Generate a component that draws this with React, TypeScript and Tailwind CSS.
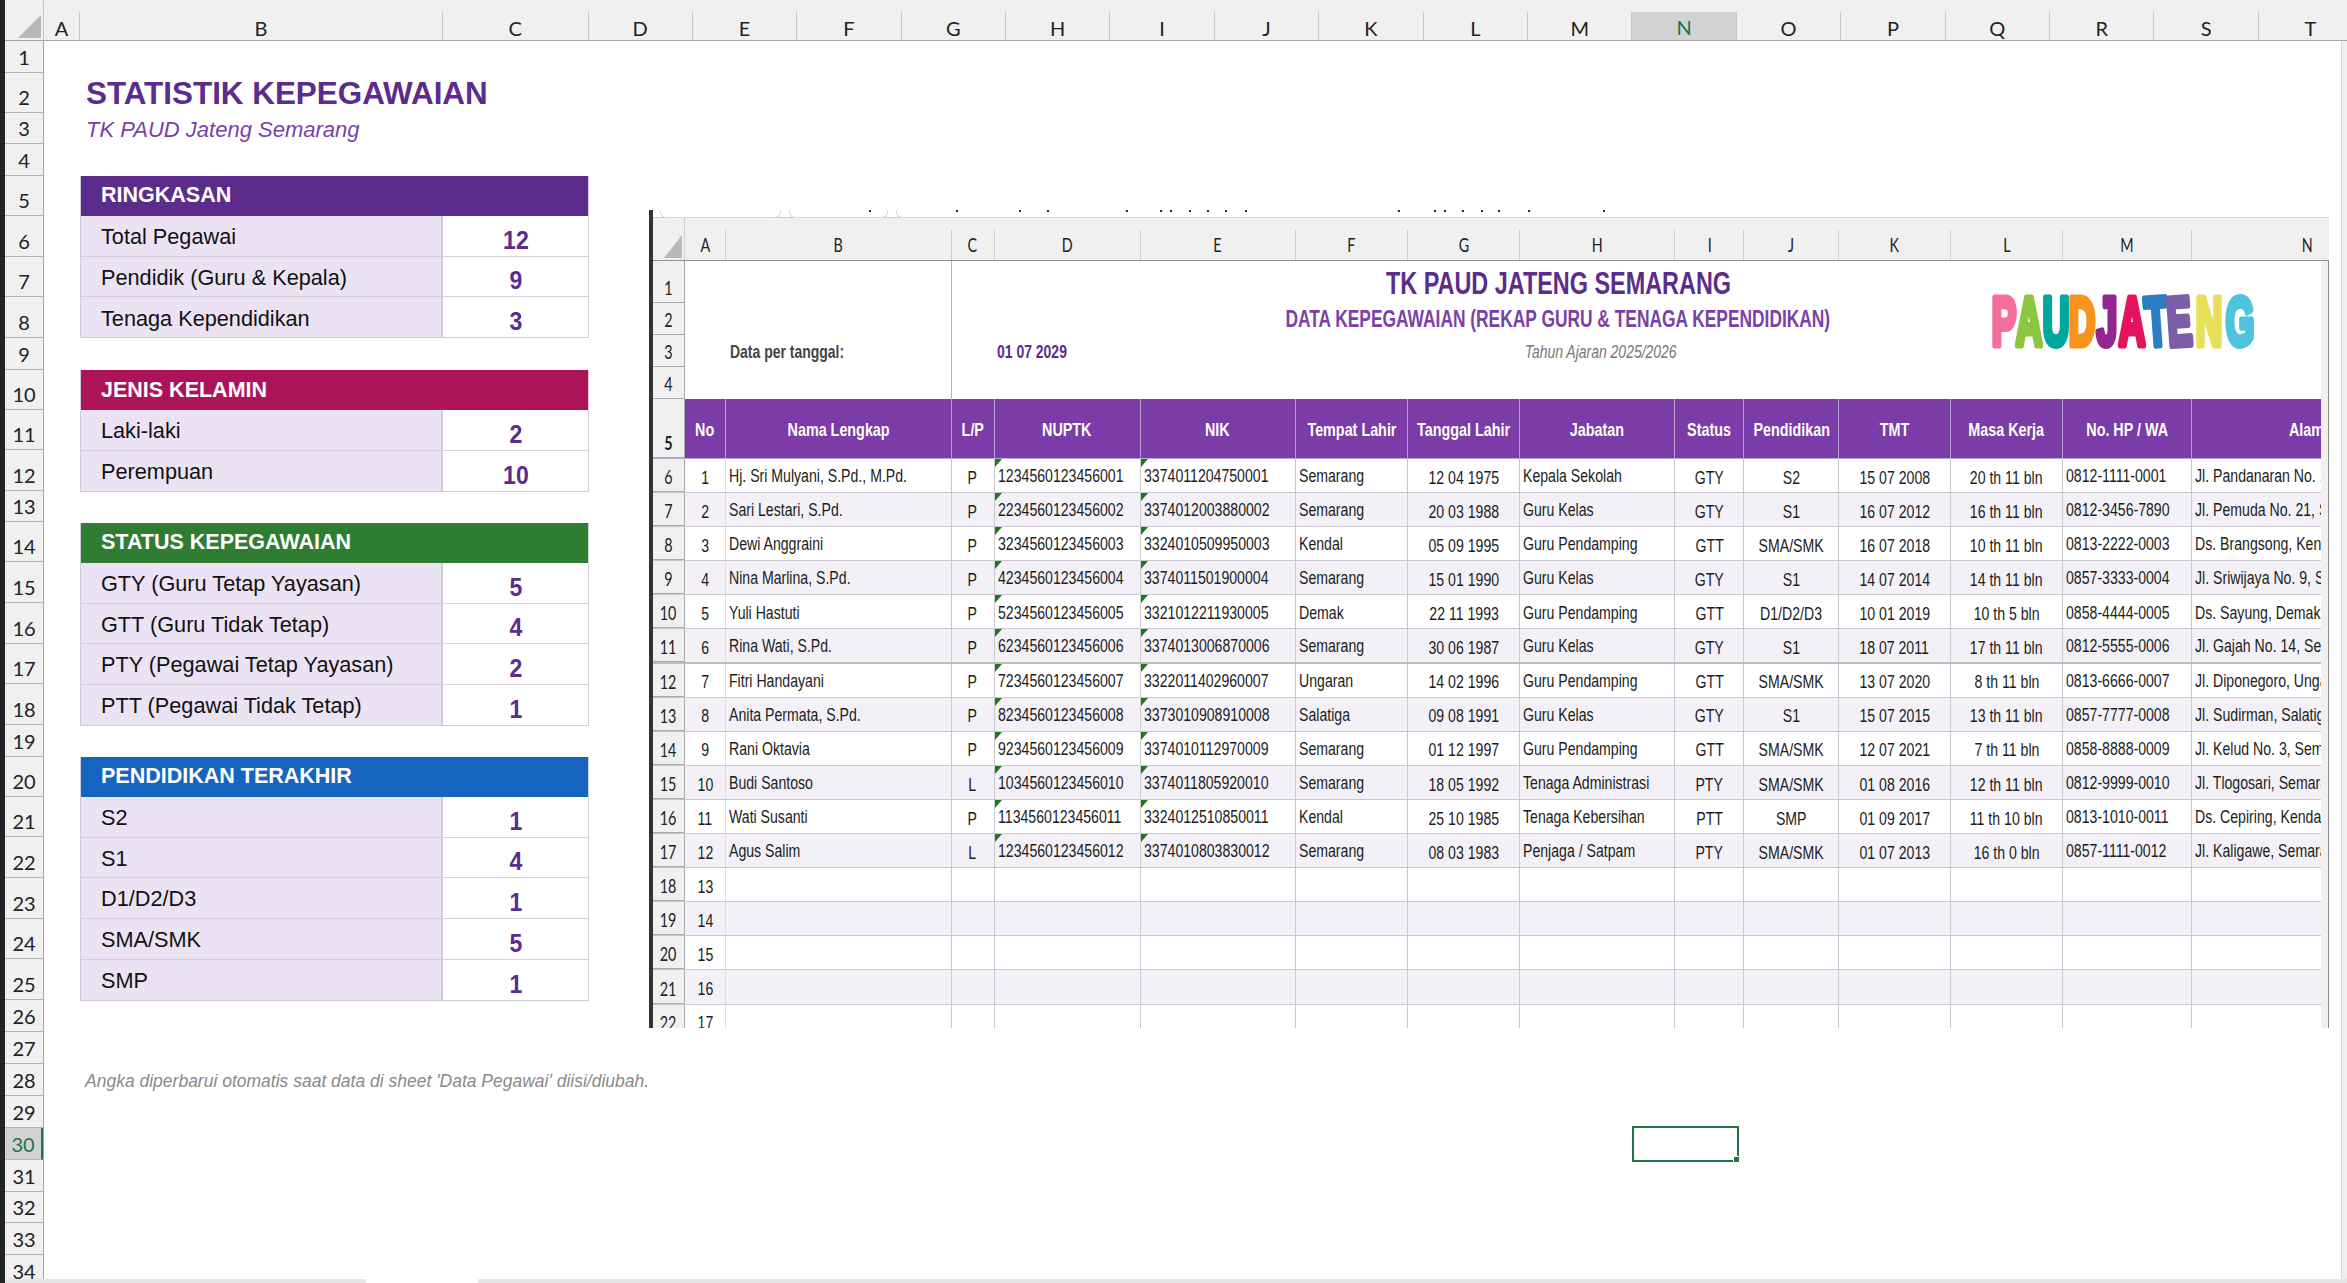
const sheetCols = "grid-cols-[39px_36px_363px_145.5px_repeat(17,104.4px)]"
const picCols = "grid-cols-[32px_41px_225.5px_43px_146px_155.5px_112.4px_111.6px_155.5px_69px_94.5px_112px_112px_129px_129px]"

const sheetLetters = ["A", "B", "C", "D", "E", "F", "G", "H", "I", "J", "K", "L", "M", "N", "O", "P", "Q", "R", "S", "T", "U"]
const picLetters = ["A", "B", "C", "D", "E", "F", "G", "H", "I", "J", "K", "L", "M", "N"]

const rowHeights = [
  "h-[32px]", "h-[40px]", "h-[31px]", "h-[32px]", "h-[40px]", "h-[41px]", "h-[40px]", "h-[41px]", "h-[32px]", "h-[40px]",
  "h-[40px]", "h-[41px]", "h-[31px]", "h-[40px]", "h-[41px]", "h-[41px]", "h-[40px]", "h-[41px]", "h-[32px]", "h-[40px]",
  "h-[40px]", "h-[41px]", "h-[41px]", "h-[40px]", "h-[41px]", "h-[32px]", "h-[32px]", "h-[32px]", "h-[32px]", "h-[32px]",
  "h-[32px]", "h-[31px]", "h-[32px]", "h-[32px]",
]

const panels = [
  {
    title: "RINGKASAN",
    color: "bg-[#5b2c8b]",
    gap: "mt-0",
    rows: [["Total Pegawai", "12"], ["Pendidik (Guru & Kepala)", "9"], ["Tenaga Kependidikan", "3"]],
  },
  {
    title: "JENIS KELAMIN",
    color: "bg-[#ad1457]",
    gap: "mt-[32px]",
    rows: [["Laki-laki", "2"], ["Perempuan", "10"]],
  },
  {
    title: "STATUS KEPEGAWAIAN",
    color: "bg-[#2e7d32]",
    gap: "mt-[31px]",
    rows: [["GTY (Guru Tetap Yayasan)", "5"], ["GTT (Guru Tidak Tetap)", "4"], ["PTY (Pegawai Tetap Yayasan)", "2"], ["PTT (Pegawai Tidak Tetap)", "1"]],
  },
  {
    title: "PENDIDIKAN TERAKHIR",
    color: "bg-[#1565c0]",
    gap: "mt-[31px]",
    rows: [["S2", "1"], ["S1", "4"], ["D1/D2/D3", "1"], ["SMA/SMK", "5"], ["SMP", "1"]],
  },
]

const pegawai = [
  ["Hj. Sri Mulyani, S.Pd., M.Pd.", "P", "1234560123456001", "3374011204750001", "Semarang", "12 04 1975", "Kepala Sekolah", "GTY", "S2", "15 07 2008", "20 th 11 bln", "0812-1111-0001", "Jl. Pandanaran No. 1, Semarang"],
  ["Sari Lestari, S.Pd.", "P", "2234560123456002", "3374012003880002", "Semarang", "20 03 1988", "Guru Kelas", "GTY", "S1", "16 07 2012", "16 th 11 bln", "0812-3456-7890", "Jl. Pemuda No. 21, Semarang"],
  ["Dewi Anggraini", "P", "3234560123456003", "3324010509950003", "Kendal", "05 09 1995", "Guru Pendamping", "GTT", "SMA/SMK", "16 07 2018", "10 th 11 bln", "0813-2222-0003", "Ds. Brangsong, Kendal"],
  ["Nina Marlina, S.Pd.", "P", "4234560123456004", "3374011501900004", "Semarang", "15 01 1990", "Guru Kelas", "GTY", "S1", "14 07 2014", "14 th 11 bln", "0857-3333-0004", "Jl. Sriwijaya No. 9, Semarang"],
  ["Yuli Hastuti", "P", "5234560123456005", "3321012211930005", "Demak", "22 11 1993", "Guru Pendamping", "GTT", "D1/D2/D3", "10 01 2019", "10 th 5 bln", "0858-4444-0005", "Ds. Sayung, Demak"],
  ["Rina Wati, S.Pd.", "P", "6234560123456006", "3374013006870006", "Semarang", "30 06 1987", "Guru Kelas", "GTY", "S1", "18 07 2011", "17 th 11 bln", "0812-5555-0006", "Jl. Gajah No. 14, Semarang"],
  ["Fitri Handayani", "P", "7234560123456007", "3322011402960007", "Ungaran", "14 02 1996", "Guru Pendamping", "GTT", "SMA/SMK", "13 07 2020", "8 th 11 bln", "0813-6666-0007", "Jl. Diponegoro, Ungaran"],
  ["Anita Permata, S.Pd.", "P", "8234560123456008", "3373010908910008", "Salatiga", "09 08 1991", "Guru Kelas", "GTY", "S1", "15 07 2015", "13 th 11 bln", "0857-7777-0008", "Jl. Sudirman, Salatiga"],
  ["Rani Oktavia", "P", "9234560123456009", "3374010112970009", "Semarang", "01 12 1997", "Guru Pendamping", "GTT", "SMA/SMK", "12 07 2021", "7 th 11 bln", "0858-8888-0009", "Jl. Kelud No. 3, Semarang"],
  ["Budi Santoso", "L", "1034560123456010", "3374011805920010", "Semarang", "18 05 1992", "Tenaga Administrasi", "PTY", "SMA/SMK", "01 08 2016", "12 th 11 bln", "0812-9999-0010", "Jl. Tlogosari, Semarang"],
  ["Wati Susanti", "P", "1134560123456011", "3324012510850011", "Kendal", "25 10 1985", "Tenaga Kebersihan", "PTT", "SMP", "01 09 2017", "11 th 10 bln", "0813-1010-0011", "Ds. Cepiring, Kendal"],
  ["Agus Salim", "L", "1234560123456012", "3374010803830012", "Semarang", "08 03 1983", "Penjaga / Satpam", "PTY", "SMA/SMK", "01 07 2013", "16 th 0 bln", "0857-1111-0012", "Jl. Kaligawe, Semarang"],
]

// true = centred column in the pasted table, starting at Nama Lengkap
const centred = [false, true, false, false, false, true, false, true, true, true, true, false, false]

const specks = [869, 956, 1019, 1047, 1126, 1160, 1170, 1189, 1207, 1225, 1245, 1398, 1434, 1444, 1462, 1481, 1498, 1528, 1603]

const logoLetters = [
  { c: "P", x: 13, fill: "#f76e9b", r: 0 },
  { c: "A", x: 38, fill: "#8cc63f", r: 0 },
  { c: "U", x: 65, fill: "#00a79d", r: 0 },
  { c: "D", x: 91, fill: "#f7941d", r: 0 },
  { c: "J", x: 116, fill: "#92278f", r: 0 },
  { c: "A", x: 141, fill: "#e3145f", r: 0 },
  { c: "T", x: 167, fill: "#2b7ec1", r: -4 },
  { c: "E", x: 190, fill: "#7b5ea7", r: -4 },
  { c: "N", x: 218, fill: "#e6e05a", r: 0 },
  { c: "G", x: 249, fill: "#4dc4db", r: 0 },
]

// The pasted table is a squeezed picture, so its text is narrowed the same way
function Narrow({ children, left, className = "" }: { children: React.ReactNode; left?: boolean; className?: string }) {
  return (
    <span className={`inline-block shrink-0 whitespace-nowrap scale-x-[0.755] ${left ? "origin-left" : "origin-center"} ${className}`}>
      {children}
    </span>
  )
}

function Panel({ panel }: { panel: (typeof panels)[number] }) {
  return (
    <div className={`${panel.gap} w-[509px] border-x border-b border-[#cfcbd9]`}>
      <div className={`flex h-[40px] items-center pb-[1px] pl-[20px] text-[21.5px] font-bold text-white ${panel.color}`}>{panel.title}</div>
      {panel.rows.map(([label, value]) => (
        <div key={label} className="grid h-[40.67px] grid-cols-[362px_1fr] border-b border-[#d3d0db] last:h-[40px] last:border-b-0">
          <div className="flex items-center border-r-2 border-[#cfcadd] bg-[#ebe3f3] pt-[3px] pl-[20px] text-[21.7px] text-[#111]">{label}</div>
          <div className="flex items-center justify-center pt-[9px] text-[25px] leading-none font-bold text-[#5b2c8b]">
            <span className="inline-block scale-x-[0.92]">{value}</span>
          </div>
        </div>
      ))}
    </div>
  )
}

function Logo() {
  return (
    <svg className="absolute top-[30px] left-[1338px]" width="266" height="60" viewBox="0 0 266 60">
      {logoLetters.map((l, i) => (
        <text
          key={i}
          transform={`translate(${l.x} 54) rotate(${l.r}) scale(0.54 1)`}
          textAnchor="middle"
          fontFamily="'Liberation Sans', sans-serif"
          fontWeight="700"
          fontSize="68"
          fill={l.fill}
          stroke={l.fill}
          strokeWidth="7"
          strokeLinejoin="round"
        >
          {l.c}
        </text>
      ))}
    </svg>
  )
}

function PicRowNum({ n, className = "" }: { n: number; className?: string }) {
  return (
    <div className={`flex items-end justify-center border-r border-b border-[#a9a9a9] bg-[#f0f0f0] [font-family:Lato,sans-serif] text-[19px] leading-none text-[#222] ${className}`}>
      <Narrow className="pb-[5px]">{n}</Narrow>
    </div>
  )
}

function BannerRow({ n, h, left, children }: { n: number; h: string; left?: React.ReactNode; children?: React.ReactNode }) {
  return (
    <div className={`flex ${h}`}>
      <PicRowNum n={n} className="w-[32px]" />
      <div className="flex w-[266.5px] items-center border-r border-[#b5b5b5] pl-[45px]">{left}</div>
      <div className="flex flex-1 items-center">{children}</div>
    </div>
  )
}

function PicRow({ rowNo, no, cells, alt }: { rowNo: number; no: number; cells?: string[]; alt: boolean }) {
  const thick = rowNo === 11
  return (
    <div className={`grid h-[34.1px] ${picCols} ${alt ? "bg-[#f3f1f7]" : "bg-white"} ${thick ? "border-b-2 border-[#bdbdbd]" : "border-b border-[#c9c7d0]"} text-[18.7px] leading-none text-[#1c1c1c]`}>
      <PicRowNum n={rowNo} />
      <div className="flex items-center justify-center overflow-hidden border-r border-[#dddbe3] pt-[5px]">
        <Narrow>{no}</Narrow>
      </div>
      {Array.from({ length: 13 }).map((_, i) => {
        const value = cells?.[i]
        const flagged = value && (i === 2 || i === 3)
        return (
          <div
            key={i}
            className={`relative flex items-center overflow-hidden border-[#c9c7d0] ${i < 12 ? "border-r" : ""} ${centred[i] ? "justify-center pt-[5px]" : "pt-[2px] pl-[3px]"}`}
          >
            {flagged && (
              <svg className="absolute top-0 left-0" width="7" height="8" viewBox="0 0 7 8">
                <polygon points="0,0 7,0 0,8" fill="#1c7a1c" />
              </svg>
            )}
            {value && <Narrow left={!centred[i]}>{value}</Narrow>}
          </div>
        )
      })}
    </div>
  )
}

function PastedTable() {
  return (
    <div className="absolute top-[169px] left-[605px] h-[818px] w-[1680px] overflow-hidden border-l-4 border-[#333] bg-white">
      {/* cut-off ribbon above the pasted picture */}
      <div className="relative flex h-[8px] gap-[8px] border-b border-[#cfcfcf] pl-[7px]">
        <div className="h-[8px] w-[121px] rounded-b-md border-x border-b border-[#d8d8d8] bg-white" />
        <div className="h-[8px] w-[99px] rounded-b-md border-x border-b border-[#d8d8d8] bg-white" />
        <div className="h-[8px] flex-1 rounded-bl-md border-l border-b border-[#d8d8d8] bg-white" />
        {specks.map((x) => (
          <span key={x} className="h-[2px] w-[2px] shrink-0 bg-[#333]" style={{ position: "absolute", top: 0, left: x - 653 }} />
        ))}
      </div>

      <div className="bg-[#f0f0f0]">
        <div className={`grid h-[43px] ${picCols} border-b border-[#8f8f8f]`}>
          <div className="relative border-r border-[#cfcfcf]">
            <svg className="absolute top-[17px] left-[11px]" width="18" height="23" viewBox="0 0 18 23">
              <polygon points="18,0 18,23 0,23" fill="#b9b9b9" />
            </svg>
          </div>
          {picLetters.map((l) => (
            <div key={l} className="mt-[12px] flex items-center justify-center border-r border-[#cfcfcf] [font-family:Lato,sans-serif] text-[19px] text-[#222] last:justify-end last:border-r-0 last:pr-[6px]">
              <Narrow>{l}</Narrow>
            </div>
          ))}
        </div>
      </div>

      <div className="flex">
        <div className="w-[1668px]">
          <div className="relative">
            <BannerRow n={1} h="h-[42px]">
              <div className="flex w-[1213.5px] justify-center pt-[2px] text-[31px] leading-none font-bold text-[#5b2c8b]">
                <Narrow>TK PAUD JATENG SEMARANG</Narrow>
              </div>
            </BannerRow>
            <BannerRow n={2} h="h-[32px]">
              <div className="flex w-[1213.5px] justify-center text-[23px] leading-none font-bold text-[#7b3fa8]">
                <Narrow>DATA KEPEGAWAIAN (REKAP GURU &amp; TENAGA KEPENDIDIKAN)</Narrow>
              </div>
            </BannerRow>
            <BannerRow
              n={3}
              h="h-[32px]"
              left={
                <span className="pt-[3px] text-[18.5px] leading-none font-bold text-[#444]">
                  <Narrow left>Data per tanggal:</Narrow>
                </span>
              }
            >
              <div className="w-[549.5px] pt-[3px] pl-[45px] text-[18.5px] leading-none font-bold text-[#5b2c8b]">
                <Narrow left>01 07 2029</Narrow>
              </div>
              <div className="flex w-[200px] justify-center pt-[3px] text-[18.5px] leading-none text-[#777] italic">
                <Narrow>Tahun Ajaran 2025/2026</Narrow>
              </div>
            </BannerRow>
            <BannerRow n={4} h="h-[32px]" />
            <Logo />
          </div>

          <div className={`grid h-[60px] ${picCols} border-b border-[#b9a8cc] bg-[#7b3ca8] text-[19px] leading-none font-bold text-white`}>
            <PicRowNum n={5} />
            {["No", "Nama Lengkap", "L/P", "NUPTK", "NIK", "Tempat Lahir", "Tanggal Lahir", "Jabatan", "Status", "Pendidikan", "TMT", "Masa Kerja", "No. HP / WA"].map((h) => (
              <div key={h} className="flex items-center justify-center border-r border-[#b79ad0] pt-[1px]">
                <Narrow>{h}</Narrow>
              </div>
            ))}
            <div className="flex items-center justify-start overflow-hidden pt-[1px] pl-[97px]">
              <Narrow left>Alamat</Narrow>
            </div>
          </div>

          {Array.from({ length: 17 }).map((_, i) => (
            <PicRow key={i} rowNo={i + 6} no={i + 1} cells={pegawai[i]} alt={i % 2 === 1} />
          ))}
        </div>
        <div className="h-[900px] w-[8px] border-r border-[#8a8a8a] bg-[#f0f0f0]" />
      </div>
    </div>
  )
}

export default function App() {
  return (
    <div className="relative flex h-[1283px] w-[2347px] flex-col overflow-hidden border-l-[5px] border-[#222] bg-white [font-family:'Liberation_Sans',Arial,sans-serif]">
      {/* white notch on the dark window edge */}
      <div className="absolute top-[640px] -left-[5px] h-[8px] w-[5px] bg-white" />

      <div className={`grid h-[41px] shrink-0 ${sheetCols} overflow-hidden border-b border-[#a6a6a6] bg-[#f0f0f0] [font-family:Lato,sans-serif] text-[20px] text-[#222]`}>
        <div className="relative border-r border-[#c6c6c6]">
          <svg className="absolute top-[15px] left-[13px]" width="23" height="23" viewBox="0 0 23 23">
            <polygon points="23,0 23,23 0,23" fill="#b8b8b8" />
          </svg>
        </div>
        {sheetLetters.map((l) =>
          l === "N" ? (
            <div key={l} className="mt-[12px] flex items-center justify-center border-r border-b-2 border-[#c6c6c6] border-b-[#217346] bg-[#d2d2d2] text-[#217346]">
              {l}
            </div>
          ) : (
            <div key={l} className="mt-[12px] flex items-center justify-center border-r border-[#c6c6c6]">
              {l}
            </div>
          ),
        )}
      </div>

      <div className="flex min-h-0 flex-1">
        <div className="w-[39px] shrink-0 overflow-hidden border-r border-[#a6a6a6] bg-[#f0f0f0] [font-family:Lato,sans-serif] text-[20px] leading-none text-[#222]">
          {rowHeights.map((h, i) =>
            i === 29 ? (
              <div key={i} className={`flex items-end justify-center border-r-2 border-b border-[#217346] border-b-[#b5b5b5] bg-[#d2d2d2] pb-[5px] text-[#217346] ${h}`}>
                {i + 1}
              </div>
            ) : (
              <div key={i} className={`flex items-end justify-center border-b border-[#b5b5b5] pb-[5px] ${h}`}>
                {i + 1}
              </div>
            ),
          )}
        </div>

        <div className="relative min-w-0 flex-1 bg-white pl-[36px]">
          <div className="pt-[32px]">
            <div className="flex h-[40px] items-center pt-[1px] pl-[6px] text-[31.4px] leading-none font-bold text-[#5b2c8b]">STATISTIK KEPEGAWAIAN</div>
            <div className="flex h-[31px] items-center pt-[3px] pl-[6px] text-[22px] leading-none text-[#7b3fa8] italic">TK PAUD Jateng Semarang</div>
            <div className="h-[32px]" />
            {panels.map((p) => (
              <Panel key={p.title} panel={p} />
            ))}
            <div className="mt-[58px] flex h-[32px] items-end pl-[5px] text-[17.5px] leading-none text-[#8a8a8a] italic">
              Angka diperbarui otomatis saat data di sheet 'Data Pegawai' diisi/diubah.
            </div>
          </div>

          <PastedTable />

          {/* active cell N30 */}
          <div className="absolute top-[1085px] left-[1588px] h-[36px] w-[107px] border-2 border-[#217346]">
            <div className="absolute -right-[3px] -bottom-[3px] h-[7px] w-[7px] border border-white bg-[#217346]" />
          </div>
        </div>

        <div className="w-[6px] shrink-0 border-l border-[#d8d8d8] bg-[#efefef]" />
      </div>

      <div className="flex h-[4px] shrink-0 bg-[#e6e6e6]">
        <div className="ml-[361px] w-[112px] bg-white" />
      </div>
    </div>
  )
}
